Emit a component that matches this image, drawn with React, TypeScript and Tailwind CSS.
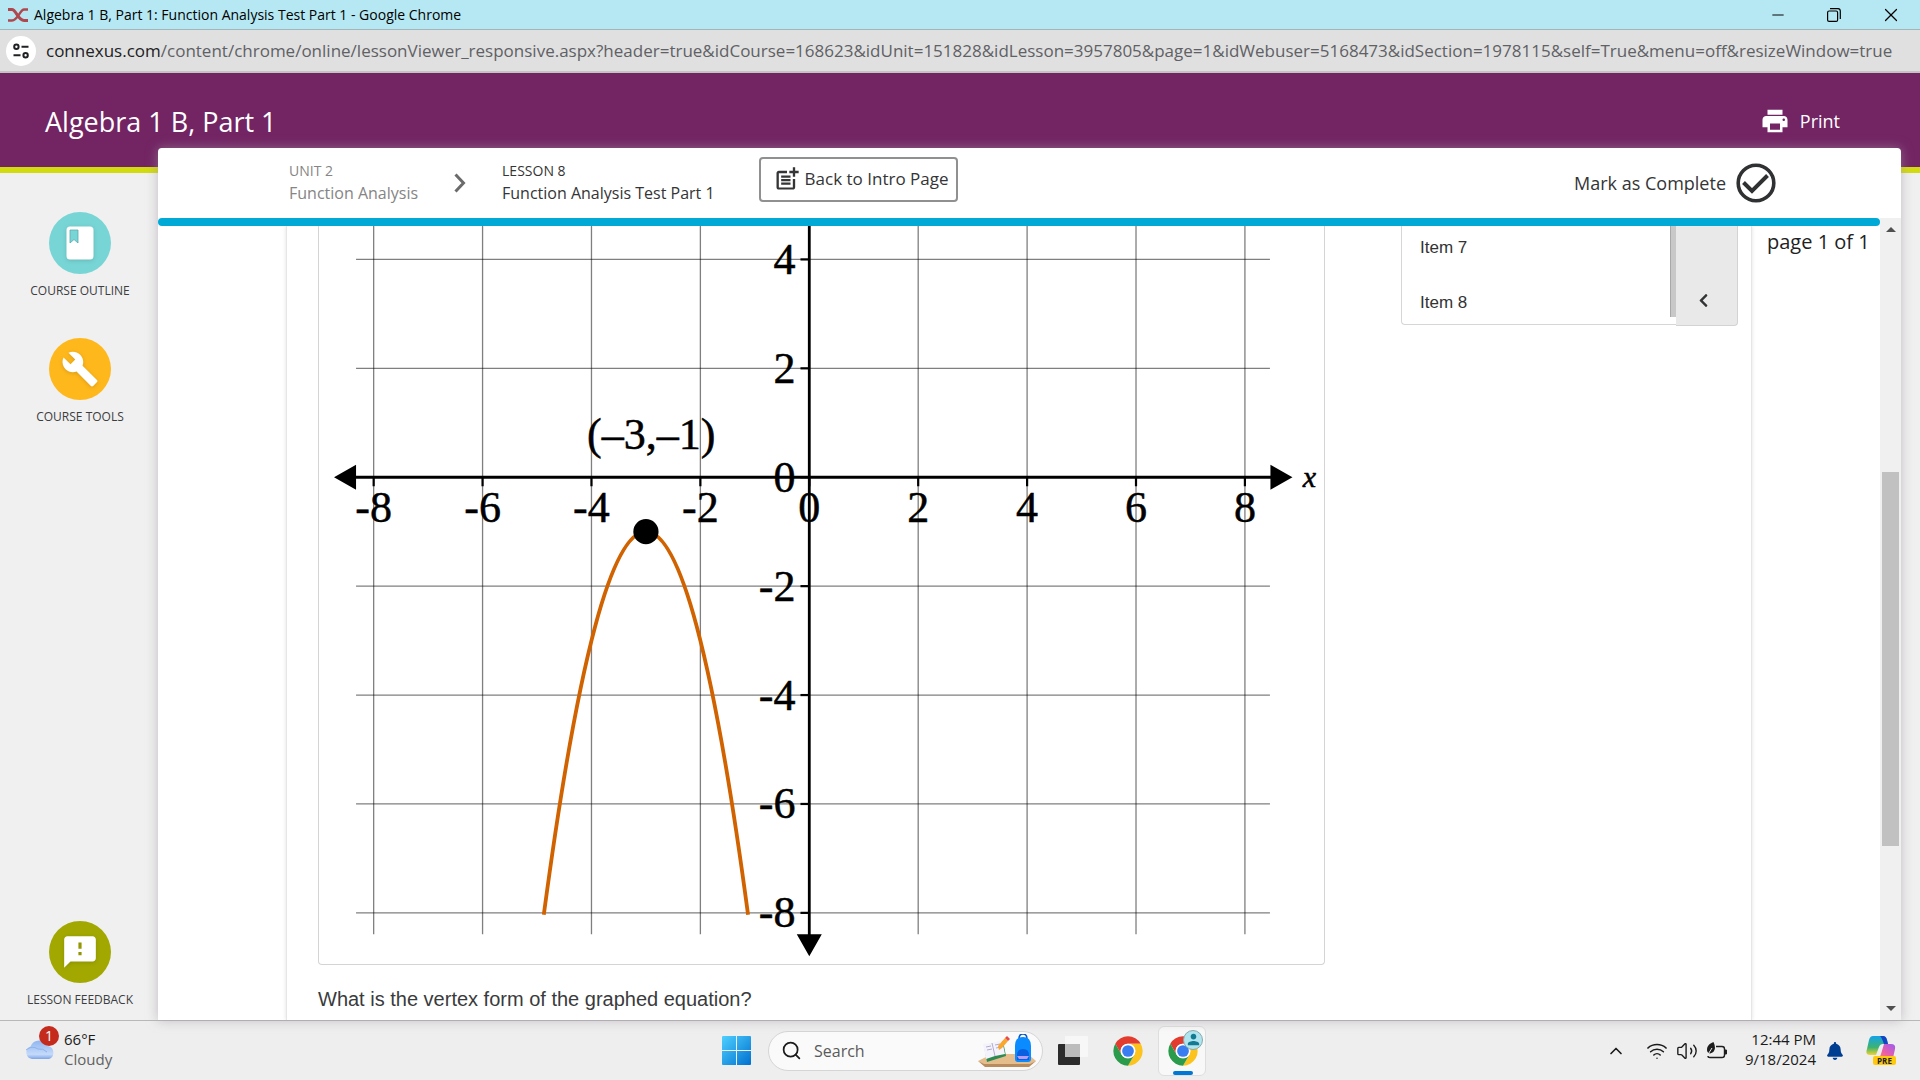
import React from 'react';
import { LuWifi, LuVolume2, LuSearch, LuChevronUp, LuMinus, LuX } from 'react-icons/lu';
import { MdPrint, MdBuild, MdFeedback, MdPostAdd, MdPerson, MdArrowDropUp, MdArrowDropDown } from 'react-icons/md';
import { FaBell, FaChevronLeft } from 'react-icons/fa';

const LessonXIcon: React.FC = () => (
  <svg width="20" height="14" viewBox="0 0 20 14" fill="none" aria-hidden="true">
    <path d="M0 1.5H4C8 1.5 10 12.5 16 12.5H20" stroke="#b0474e" strokeWidth="3" />
    <path d="M0 12.5H4C10 12.5 12 1.5 16 1.5H20" stroke="#b0474e" strokeWidth="2.4" />
  </svg>
);

const TitleBar: React.FC = () => (
  <div className="flex h-[30px] items-center justify-between border-b border-[#a3b5b8] bg-[#b5e8f3] pl-2 text-black">
    <div className="flex items-center gap-1.5">
      <LessonXIcon />
      <span className="text-sm leading-5">Algebra 1 B, Part 1: Function Analysis Test Part 1 - Google Chrome</span>
    </div>
    <div className="flex h-full">
      <button aria-label="Minimize" className="flex w-14 items-center justify-center">
        <LuMinus size={18} strokeWidth={1.3} />
      </button>
      <button aria-label="Restore" className="flex w-14 items-center justify-center">
        <svg width="14" height="14" viewBox="0 0 14 14" fill="none" stroke="currentColor" strokeWidth="1.2">
          <rect x="0.6" y="3" width="10" height="10.4" rx="1.5" />
          <path d="M3 0.7H11A2.4 2.4 0 0 1 13.3 3V11" />
        </svg>
      </button>
      <button aria-label="Close" className="flex w-[58px] items-center justify-center">
        <LuX size={22} strokeWidth={1.3} />
      </button>
    </div>
  </div>
);

const AddressBar: React.FC = () => (
  <div className="flex h-[43px] items-center gap-2.5 border-b-2 border-[#c4c4c4] bg-[#e0e0e0] pl-1.5">
    <button aria-label="Site information" className="flex size-[30px] shrink-0 items-center justify-center rounded-full bg-white">
      <svg width="16" height="16" viewBox="0 0 16 16" fill="none" stroke="#202124" strokeWidth="2">
        <circle cx="3.4" cy="3.8" r="2.2" />
        <path d="M8.5 3.8H15.5M0.5 12.2H7.5" />
        <circle cx="12.6" cy="12.2" r="2.2" />
      </svg>
    </button>
    <span className="text-[17px] leading-6 whitespace-nowrap text-[#5f6165]">
      <span className="text-[#202124]">connexus.com</span>
      /content/chrome/online/lessonViewer_responsive.aspx?header=true&amp;idCourse=168623&amp;idUnit=151828&amp;idLesson=3957805&amp;page=1&amp;idWebuser=5168473&amp;idSection=1978115&amp;self=True&amp;menu=off&amp;resizeWindow=true
    </span>
  </div>
);

const BookIcon: React.FC = () => (
  <svg width="28" height="34" viewBox="0 0 28 34" aria-hidden="true" className="drop-shadow-sm">
    <rect x="0.5" y="0.5" width="27" height="33" rx="3.5" fill="#fff" />
    <path d="M4 4H12V17L8 13.5L4 17Z" fill="#78d5d5" stroke="#5aa9ad" strokeWidth="0.8" />
  </svg>
);

type SideItemProps = { label: string; children: React.ReactNode; color: string };

const SideItem: React.FC<SideItemProps> = ({ label, children, color }) => (
  <button className="flex flex-col items-center gap-[7px] text-[#3c3d3f]">
    <span className={`flex size-[62px] items-center justify-center rounded-full text-white ${color}`}>{children}</span>
    <span className="text-xs leading-5 whitespace-nowrap">{label}</span>
  </button>
);

const Sidebar: React.FC = () => (
  <aside className="flex w-[158px] shrink-0 flex-col items-center gap-[37px] pt-[39px] pb-2.5 pl-0.5">
    <SideItem label="COURSE OUTLINE" color="bg-[#78d5d5]">
      <BookIcon />
    </SideItem>
    <SideItem label="COURSE TOOLS" color="bg-[#ffb81c]">
      <MdBuild size={38} className="drop-shadow-sm" />
    </SideItem>
    <div className="mt-auto">
      <SideItem label="LESSON FEEDBACK" color="bg-[#a2a800]">
        <MdFeedback size={38} className="drop-shadow-sm" />
      </SideItem>
    </div>
  </aside>
);

const LessonBar: React.FC = () => (
  <div className="flex h-[70px] shrink-0 items-center pr-[125px] pl-[131px] text-[#343536]">
    <a href="#unit" className="mb-0.5 flex flex-col text-[#858585]">
      <span className="text-sm leading-[23px]">UNIT 2</span>
      <span className="text-base leading-[23px]">Function Analysis</span>
    </a>
    <svg className="mx-9" width="12" height="20" viewBox="0 0 12 20" fill="none" aria-hidden="true">
      <path d="M1.5 1.5L9.5 10L1.5 18.5" stroke="#6b6b6b" strokeWidth="3" />
    </svg>
    <div className="mb-0.5 flex flex-col">
      <span className="text-sm leading-[23px]">LESSON 8</span>
      <span className="text-base leading-[23px]">Function Analysis Test Part 1</span>
    </div>
    <button className="mb-2 ml-11 flex h-[45px] w-[199px] items-center gap-1 rounded-sm border-2 border-[#909090] pl-3 text-[17px] whitespace-nowrap">
      <MdPostAdd size={28} />
      Back to Intro Page
    </button>
    <button className="ml-auto flex items-center gap-2.5 text-lg">
      Mark as Complete
      <svg width="40" height="40" viewBox="0 0 40 40" fill="none" stroke="#303132" strokeWidth="3.6" aria-hidden="true">
        <circle cx="20" cy="20" r="17.8" />
        <path d="M7.5 19.5L16 28L31.5 12.5" strokeWidth="4" />
      </svg>
    </button>
  </div>
);

const UNIT = 54.4;
const px = (x: number) => 808.8 + x * UNIT;
const py = (y: number) => 477 - y * UNIT;
const ticks = [-8, -6, -4, -2, 0, 2, 4, 6, 8];
const reach = Math.sqrt(3.5);

const ParabolaGraph: React.FC = () => (
  <svg viewBox="319 226 1004 737" className="block h-auto w-full" role="img" aria-label="Downward parabola with vertex (-3, -1)">
    <g stroke="#000" strokeOpacity="0.5" strokeWidth="1.3">
      {ticks.map((t) => (
        <line key={`v${t}`} x1={px(t)} x2={px(t)} y1={py(8)} y2={933.5} />
      ))}
      {ticks.map((t) => (
        <line key={`h${t}`} x1={356} x2={1269} y1={py(t)} y2={py(t)} />
      ))}
    </g>
    <g stroke="#000" strokeWidth="2.8">
      <line x1={px(0)} x2={px(0)} y1={py(8)} y2={936} />
      <line x1={354} x2={1272} y1={py(0)} y2={py(0)} />
      {ticks.map((t) => (
        <line key={`tx${t}`} x1={px(t)} x2={px(t)} y1={477} y2={486} strokeWidth="2.2" />
      ))}
      {ticks.map((t) => (
        <line key={`ty${t}`} x1={800} x2={809} y1={py(t)} y2={py(t)} strokeWidth="2.2" />
      ))}
    </g>
    <path d="M334 477L356 464.5V489.5Z M1291.500 477L1269.500 464.5V489.5Z M808.8 955.5L796.3 933.5H821.3Z" />
    <path
      d={`M${px(-3 - reach)} ${py(-8)}Q${px(-3)} ${py(6)} ${px(-3 + reach)} ${py(-8)}`}
      fill="none"
      stroke="#d16200"
      strokeWidth="3.8"
      strokeLinecap="square"
    />
    <circle cx={px(-3)} cy={py(-1)} r="12.6" />
    <g className="font-['Liberation_Serif',serif]" fontSize="44" stroke="#000" strokeWidth="0.5">
      {ticks.map((t) => (
        <text key={t} x={px(t)} y={522} textAnchor="middle">{t}</text>
      ))}
      {ticks.filter((t) => t <= 4).map((t) => (
        <text key={t} x={795} y={py(t) + 14.5} textAnchor="end">{t}</text>
      ))}
      <text x={651} y={449} textAnchor="middle">(–3,–1)</text>
      <text x={1308.5} y={486.5} textAnchor="middle" fontSize="30" fontStyle="italic">x</text>
    </g>
  </svg>
);

const ItemPicker: React.FC = () => (
  <div className="flex w-[337px] shrink-0 items-start font-['Liberation_Sans',sans-serif] text-[17px] text-[#323334]">
    <div className="flex h-[99px] flex-1 rounded-bl-sm border-b border-l border-[#d6d6d6]">
      <ul className="flex-1 pl-[18px]">
        <li className="h-[55px] leading-[43px]"><a href="#item-7">Item 7</a></li>
        <li className="leading-[43px]"><a href="#item-8">Item 8</a></li>
      </ul>
      <div className="h-[91px] w-1.5 border-l border-[#a8a8a8] bg-[#c8c8c8]" />
    </div>
    <button aria-label="Collapse item list" className="flex h-[100px] w-[62px] items-end justify-center rounded-br-sm border-r border-b border-[#d3d3d3] bg-[#e9e9e9] pr-1.5 pb-[17px]">
      <FaChevronLeft size={15} />
    </button>
  </div>
);

const Scrollbar: React.FC = () => (
  <div className="flex w-[21px] shrink-0 flex-col items-center bg-[#f0f0f0] text-[#505050]">
    <button aria-label="Scroll up"><MdArrowDropUp size={24} /></button>
    <div className="mt-[230px] h-[374px] w-[17px] bg-[#c1c1c1]" />
    <button aria-label="Scroll down" className="mt-auto"><MdArrowDropDown size={24} /></button>
  </div>
);

const LessonPanel: React.FC = () => (
  <section className="z-10 -mt-[25px] mr-[19px] flex min-w-0 flex-1 flex-col overflow-hidden rounded-t bg-white shadow-[0_0_12px_rgba(160,150,160,0.6)]">
    <LessonBar />
    <div className="flex min-h-0 flex-1">
      <div className="flex min-w-0 flex-1 flex-col">
        <div className="h-2 shrink-0 rounded-full bg-[#00a9d6]" />
        <div className="flex min-h-0 flex-1 overflow-hidden">
          <main className="ml-32 flex min-w-0 flex-1 items-start border-x border-[#e6e6e6] pr-[13px] pl-[31px] shadow-[0_0_4px_rgba(0,0,0,0.12)]">
            <div className="mr-[76px] min-w-0 flex-1">
              <div className="rounded-b border border-t-0 border-[#d4d4d4]">
                <ParabolaGraph />
              </div>
              <p className="pt-5 font-['Liberation_Sans',sans-serif] text-xl text-[#3a3b3c]">
                What is the vertex form of the graphed equation?
              </p>
            </div>
            <ItemPicker />
          </main>
          <p className="w-32 shrink-0 pt-0.5 pl-[15px] text-xl whitespace-nowrap text-[#222]">page 1 of 1</p>
        </div>
      </div>
      <Scrollbar />
    </div>
  </section>
);

const ChromeIcon: React.FC = () => {
  const blade = 'M24 13H43.05A22 22 0 0 0 4.95 13L14.47 29.5A11 11 0 0 1 24 13Z';
  return (
    <svg width="32" height="32" viewBox="0 0 48 48" aria-hidden="true">
      <circle cx="24" cy="24" r="12" fill="#fff" />
      <path d={blade} fill="#e33b2e" />
      <path d={blade} fill="#fcc31e" transform="rotate(120 24 24)" />
      <path d={blade} fill="#2a9a4b" transform="rotate(240 24 24)" />
      <circle cx="24" cy="24" r="11" fill="#fff" />
      <circle cx="24" cy="24" r="8.8" fill="#3a7df0" />
    </svg>
  );
};

const WindowsIcon: React.FC = () => (
  <svg width="29" height="29" viewBox="0 0 29 29" aria-hidden="true">
    <defs>
      <linearGradient id="win" x1="0" y1="0" x2="1" y2="1">
        <stop offset="0" stopColor="#4fd0ff" />
        <stop offset="1" stopColor="#0070cf" />
      </linearGradient>
    </defs>
    <path d="M1 0H14V14H0V1Q0 0 1 0ZM15 0H28Q29 0 29 1V14H15ZM0 15H14V29H1Q0 29 0 28ZM15 15H29V28Q29 29 28 29H15Z" fill="url(#win)" />
  </svg>
);

const DeskIcon: React.FC = () => (
  <svg width="58" height="34" viewBox="0 0 58 34" aria-hidden="true">
    <path d="M0 27L14 20H50L58 27L52 31H6Z" fill="#e5bd8c" />
    <path d="M0 27L6 30H52L58 27L51 33H7Z" fill="#b98b5d" />
    <path d="M6 12L25 7L28 22L9 28Z" fill="#2f8a52" />
    <path d="M5 10L14 9L24 6L27 20L17 22L8 25Z" fill="#f4f2fb" />
    <path d="M14 9L17 22M8 13L13 12M9 16L14 15M17 11L22 10M18 14L23 13" stroke="#a9a4c8" strokeWidth="0.9" />
    <path d="M21 16L20 12L27 4L30 7L24 14Z" fill="#f8a62c" />
    <path d="M27 4L29 2L32 5L30 7Z" fill="#e5484d" />
    <path d="M41 5Q41 0 45 0Q49 0 49 5" fill="none" stroke="#0b57c4" strokeWidth="1.6" />
    <path d="M37 12Q37 3 45 3Q53 3 53 12V25Q53 28 50 28H40Q37 28 37 25Z" fill="#0a8bff" />
    <path d="M39 21Q39 15 45 15Q51 15 51 21V26H39Z" fill="#0a5fe0" />
    <path d="M39 22H51L49 25H41Z" fill="#b79bff" />
  </svg>
);

const TaskViewIcon: React.FC = () => (
  <svg width="30" height="29" viewBox="0 0 30 29" aria-hidden="true">
    <rect x="0" y="8" width="22" height="21" rx="1" fill="#2c2c2c" />
    <rect x="7" y="0" width="23" height="21" rx="1" fill="#f7f7f7" />
    <path d="M7 8H22V21H7Z" fill="#bcbcbc" />
  </svg>
);

const CloudIcon: React.FC = () => (
  <svg width="31" height="22" viewBox="0 0 31 22" aria-hidden="true">
    <defs>
      <linearGradient id="cloud" x1="0" y1="0" x2="0" y2="1">
        <stop offset="0" stopColor="#8fb6f0" />
        <stop offset="0.75" stopColor="#c4dafa" />
        <stop offset="1" stopColor="#7da5e8" />
      </linearGradient>
    </defs>
    <path d="M7 21A6.5 6.5 0 0 1 5.5 8.5A9.5 9.5 0 0 1 23 8A6.8 6.8 0 0 1 24 21Z" fill="url(#cloud)" />
    <path d="M1 12Q7 7 13 11Q18 10 22 14" fill="none" stroke="#8fb2ec" strokeWidth="1" />
  </svg>
);

const BatteryIcon: React.FC = () => (
  <svg width="21" height="18" viewBox="0 0 21 18" fill="none" aria-hidden="true">
    <path d="M10 4.5H16A2.5 2.5 0 0 1 18.5 7V13A2.5 2.5 0 0 1 16 15.5H4Q2 15.5 2 14" stroke="#1d1d1d" strokeWidth="1.4" />
    <path d="M19 8H20.5V12H19Z" fill="#1d1d1d" stroke="#1d1d1d" />
    <path d="M7.5 0C3 2 1 4 1 8Q1 10.5 4 11.5Q8.5 10.5 9 6Q9 3 7.5 0Z" fill="#1d1d1d" />
    <path d="M1 14L6 6" stroke="#eee" />
  </svg>
);

const CopilotIcon: React.FC = () => (
  <svg width="30" height="30" viewBox="0 0 30 30" aria-hidden="true">
    <defs>
      <linearGradient id="coA" x1="0" y1="0" x2="0" y2="1">
        <stop offset="0" stopColor="#14a3ea" />
        <stop offset="0.6" stopColor="#3cb371" />
        <stop offset="1" stopColor="#f3d22c" />
      </linearGradient>
      <linearGradient id="coB" x1="1" y1="0" x2="0" y2="1">
        <stop offset="0" stopColor="#9a5cf2" />
        <stop offset="0.6" stopColor="#ee5fa5" />
        <stop offset="1" stopColor="#fb8c4a" />
      </linearGradient>
    </defs>
    <path d="M7 0H17Q20 0 21 4L22 8H17Q14 8 13 11L10 19H4Q-1 19 1 13L3 4Q4 0 7 0Z" fill="url(#coA)" />
    <path d="M14 0H17Q20 0 21 4L22 8H18Q15 0 14 0Z" fill="#1445c4" />
    <path d="M18 8H25Q30 8 29 13L27 22H11Q14 22 15 18Z" fill="url(#coB)" />
    <rect x="7" y="20" width="23" height="9" rx="2" fill="#ffc90e" />
    <text x="18.5" y="27.5" textAnchor="middle" fontSize="8" fontWeight="700" fill="#222">PRE</text>
  </svg>
);

const Taskbar: React.FC = () => (
  <footer className="grid h-[60px] shrink-0 grid-cols-[1fr_auto_1fr] items-center border-t border-[#b8b8b8] bg-[#eeeeee] text-[15px] leading-5 text-[#1b1b1b]">
    <button className="flex items-center gap-2 justify-self-start pb-1 pl-[25px] text-left">
      <span className="relative">
        <CloudIcon />
        <span className="absolute -top-3 left-3.5 flex size-5 items-center justify-center rounded-full bg-[#c42b1c] text-sm text-white">1</span>
      </span>
      <span className="flex flex-col">
        <span>66°F</span>
        <span className="text-[#616161]">Cloudy</span>
      </span>
    </button>

    <div className="flex items-center pl-2">
      <button aria-label="Start"><WindowsIcon /></button>
      <label className="ml-[17px] flex h-10 w-[275px] items-center rounded-full border border-[#d5d5d5] bg-[#fafafa] pr-1.5 pl-3">
        <LuSearch size={21} />
        <input
          type="search"
          aria-label="Search"
          placeholder="Search"
          className="ml-3 min-w-0 flex-1 bg-transparent text-base outline-none placeholder:text-[#5a5a5a]"
        />
        <DeskIcon />
      </label>
      <button aria-label="Task view" className="ml-[15px]"><TaskViewIcon /></button>
      <button aria-label="Google Chrome" className="ml-6"><ChromeIcon /></button>
      <button aria-label="Google Chrome, lesson window" className="relative ml-3.5 flex h-[50px] w-12 items-center rounded-md border border-[#dedede] bg-[#f8f8f8] pl-2">
        <ChromeIcon />
        <span className="absolute top-[3px] right-0.5 flex size-5 items-center justify-center rounded-full border border-[#8aa] bg-[#b0e4ee] text-[#147a92]">
          <MdPerson size={17} />
        </span>
        <span className="absolute bottom-0 left-3.5 h-1 w-5 rounded-full bg-[#0078d4]" />
      </button>
    </div>

    <div className="flex items-center justify-self-end pr-6">
      <button aria-label="Show hidden icons" className="mr-5"><LuChevronUp size={20} /></button>
      <button aria-label="Network, volume and battery" className="flex items-center gap-2">
        <LuWifi size={22} strokeWidth={1.6} />
        <LuVolume2 size={22} strokeWidth={1.5} />
        <BatteryIcon />
      </button>
      <div className="ml-[18px] flex flex-col pb-1 text-right">
        <time>12:44 PM</time>
        <time>9/18/2024</time>
      </div>
      <button aria-label="Notifications" className="ml-2.5 text-[#003e92]"><FaBell size={18} /></button>
      <button aria-label="Copilot" className="ml-[22px]"><CopilotIcon /></button>
    </div>
  </footer>
);

export default function App() {
  return (
    <div className="flex h-screen flex-col overflow-hidden bg-[#f0f0f0] font-['Open_Sans','Noto_Sans',sans-serif]">
      <TitleBar />
      <AddressBar />
      <header className="flex h-[100px] shrink-0 items-start justify-between border-b-[6px] border-[#d2db0e] bg-[#722463] pt-[29px] pr-20 pl-[45px] text-white">
        <h1 className="text-[27px] leading-10">Algebra 1 B, Part 1</h1>
        <button className="flex h-[38px] items-center gap-2.5 text-lg">
          <MdPrint size={30} />
          Print
        </button>
      </header>
      <div className="flex min-h-0 flex-1">
        <Sidebar />
        <LessonPanel />
      </div>
      <Taskbar />
    </div>
  );
}
